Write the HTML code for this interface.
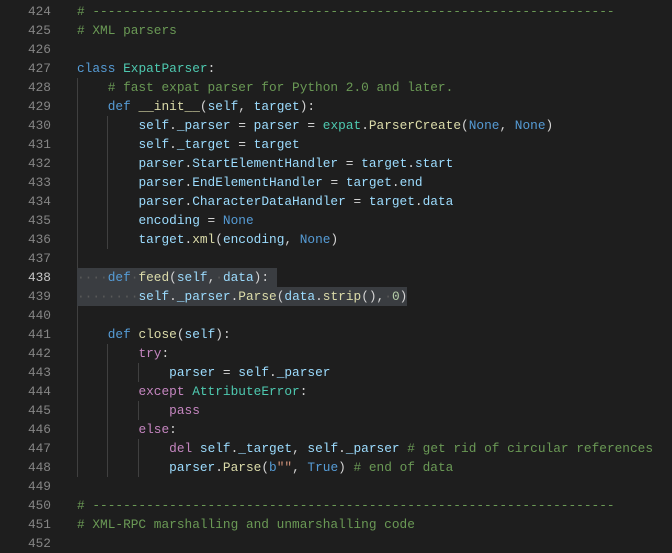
<!DOCTYPE html>
<html><head><meta charset="utf-8"><style>
html,body{margin:0;padding:0;background:#1e1e1e;width:672px;height:553px;overflow:hidden}
body{position:relative;font-family:"Liberation Mono",monospace;font-size:12.8px;color:#d4d4d4}
.l{position:absolute;left:0;height:19px;line-height:19px;white-space:pre;width:672px}
.n{position:absolute;left:0;width:51px;text-align:right;color:#858585}
.n.a{color:#c6c6c6}
.c{position:absolute;left:77px}
.g{position:absolute;width:1px;background:#404040}
.sel{background:#3a3d41}
.ws{color:#5a5a5a}
.cm{color:#6a9955}.k{color:#569cd6}.t{color:#4ec9b0}.f{color:#dcdcaa}.v{color:#9cdcfe}.p{color:#c586c0}.s{color:#ce9178}.nu{color:#b5cea8}
</style></head><body>
<div class="g" style="left:77px;top:78px;height:399px"></div>
<div class="g" style="left:107px;top:116px;height:133px"></div>
<div class="g" style="left:107px;top:344px;height:133px"></div>
<div class="g" style="left:138px;top:363px;height:19px"></div>
<div class="g" style="left:138px;top:401px;height:19px"></div>
<div class="g" style="left:138px;top:439px;height:38px"></div>

<div class="l" style="top:2px"><span class="n">424</span><span class="c cm"># --------------------------------------------------------------------</span></div>
<div class="l" style="top:21px"><span class="n">425</span><span class="c cm"># XML parsers</span></div>
<div class="l" style="top:40px"><span class="n">426</span></div>
<div class="l" style="top:59px"><span class="n">427</span><span class="c"><span class="k">class</span> <span class="t">ExpatParser</span>:</span></div>
<div class="l" style="top:78px"><span class="n">428</span><span class="c">    <span class="cm"># fast expat parser for Python 2.0 and later.</span></span></div>
<div class="l" style="top:97px"><span class="n">429</span><span class="c">    <span class="k">def</span> <span class="f">__init__</span>(<span class="v">self</span>, <span class="v">target</span>):</span></div>
<div class="l" style="top:116px"><span class="n">430</span><span class="c">        <span class="v">self</span>.<span class="v">_parser</span> = <span class="v">parser</span> = <span class="t">expat</span>.<span class="f">ParserCreate</span>(<span class="k">None</span>, <span class="k">None</span>)</span></div>
<div class="l" style="top:135px"><span class="n">431</span><span class="c">        <span class="v">self</span>.<span class="v">_target</span> = <span class="v">target</span></span></div>
<div class="l" style="top:154px"><span class="n">432</span><span class="c">        <span class="v">parser</span>.<span class="v">StartElementHandler</span> = <span class="v">target</span>.<span class="v">start</span></span></div>
<div class="l" style="top:173px"><span class="n">433</span><span class="c">        <span class="v">parser</span>.<span class="v">EndElementHandler</span> = <span class="v">target</span>.<span class="v">end</span></span></div>
<div class="l" style="top:192px"><span class="n">434</span><span class="c">        <span class="v">parser</span>.<span class="v">CharacterDataHandler</span> = <span class="v">target</span>.<span class="v">data</span></span></div>
<div class="l" style="top:211px"><span class="n">435</span><span class="c">        <span class="v">encoding</span> = <span class="k">None</span></span></div>
<div class="l" style="top:230px"><span class="n">436</span><span class="c">        <span class="v">target</span>.<span class="f">xml</span>(<span class="v">encoding</span>, <span class="k">None</span>)</span></div>
<div class="l" style="top:249px"><span class="n">437</span></div>
<div class="l" style="top:268px"><span class="n a">438</span><span class="c sel"><span class="ws">····</span><span class="k">def</span><span class="ws">·</span><span class="f">feed</span>(<span class="v">self</span>,<span class="ws">·</span><span class="v">data</span>):<span> </span></span></div>
<div class="l" style="top:287px"><span class="n">439</span><span class="c sel"><span class="ws">········</span><span class="v">self</span>.<span class="v">_parser</span>.<span class="f">Parse</span>(<span class="v">data</span>.<span class="f">strip</span>(),<span class="ws">·</span><span class="nu">0</span>)</span></div>
<div class="l" style="top:306px"><span class="n">440</span></div>
<div class="l" style="top:325px"><span class="n">441</span><span class="c">    <span class="k">def</span> <span class="f">close</span>(<span class="v">self</span>):</span></div>
<div class="l" style="top:344px"><span class="n">442</span><span class="c">        <span class="p">try</span>:</span></div>
<div class="l" style="top:363px"><span class="n">443</span><span class="c">            <span class="v">parser</span> = <span class="v">self</span>.<span class="v">_parser</span></span></div>
<div class="l" style="top:382px"><span class="n">444</span><span class="c">        <span class="p">except</span> <span class="t">AttributeError</span>:</span></div>
<div class="l" style="top:401px"><span class="n">445</span><span class="c">            <span class="p">pass</span></span></div>
<div class="l" style="top:420px"><span class="n">446</span><span class="c">        <span class="p">else</span>:</span></div>
<div class="l" style="top:439px"><span class="n">447</span><span class="c">            <span class="p">del</span> <span class="v">self</span>.<span class="v">_target</span>, <span class="v">self</span>.<span class="v">_parser</span> <span class="cm"># get rid of circular references</span></span></div>
<div class="l" style="top:458px"><span class="n">448</span><span class="c">            <span class="v">parser</span>.<span class="f">Parse</span>(<span class="k">b</span><span class="s">""</span>, <span class="k">True</span>) <span class="cm"># end of data</span></span></div>
<div class="l" style="top:477px"><span class="n">449</span></div>
<div class="l" style="top:496px"><span class="n">450</span><span class="c cm"># --------------------------------------------------------------------</span></div>
<div class="l" style="top:515px"><span class="n">451</span><span class="c cm"># XML-RPC marshalling and unmarshalling code</span></div>
<div class="l" style="top:534px"><span class="n">452</span></div>
</body></html>
